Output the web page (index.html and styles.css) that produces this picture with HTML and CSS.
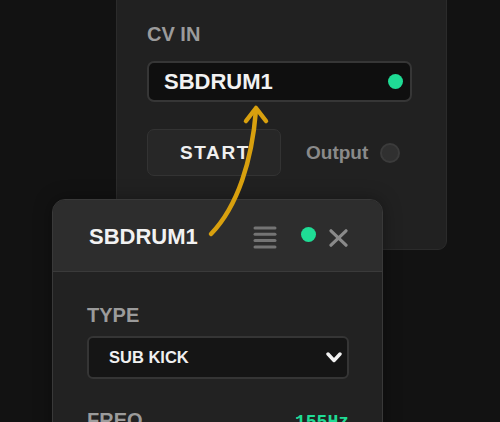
FILE: index.html
```html
<!DOCTYPE html>
<html>
<head>
<meta charset="utf-8">
<link rel="stylesheet" href="styles.css">
</head>
<body>
<div class="desk">
  <section class="panel back">
    <div class="label">CV IN</div>
    <div class="input">
      <span class="input-text">SBDRUM1</span>
      <span class="dot"></span>
    </div>
    <div class="controls">
      <button class="start">START</button>
      <span class="output">Output</span>
      <span class="led"></span>
    </div>
  </section>

  <section class="panel front">
    <header class="head">
      <span class="title">SBDRUM1</span>
      <svg class="menu" width="24" height="24" viewBox="0 0 24 24">
        <g stroke="#747474" stroke-width="3" stroke-linecap="round">
          <line x1="2" y1="3" x2="22" y2="3"/>
          <line x1="2" y1="9.3" x2="22" y2="9.3"/>
          <line x1="2" y1="15.6" x2="22" y2="15.6"/>
          <line x1="2" y1="22" x2="22" y2="22"/>
        </g>
      </svg>
      <span class="dot"></span>
      <svg class="close" width="19" height="18" viewBox="0 0 19 18">
        <g stroke="#8a8a8a" stroke-width="3.2" stroke-linecap="round">
          <line x1="2" y1="1.8" x2="17" y2="16.2"/>
          <line x1="17" y1="1.8" x2="2" y2="16.2"/>
        </g>
      </svg>
    </header>
    <div class="body">
      <div class="label">TYPE</div>
      <div class="select">
        <span class="select-text">SUB KICK</span>
        <svg class="chev" width="16" height="11" viewBox="0 0 16 11">
          <polyline points="2,2 8,8.5 14,2" fill="none" stroke="#f2f2f2" stroke-width="3.4" stroke-linecap="round" stroke-linejoin="round"/>
        </svg>
      </div>
      <div class="row">
        <span class="label">FREQ</span>
        <span class="value">155Hz</span>
      </div>
    </div>
  </section>

  <svg class="arrow" width="500" height="422" viewBox="0 0 500 422">
    <g fill="none" stroke="#d8a00e" stroke-width="4.5" stroke-linecap="round" stroke-linejoin="round">
      <path d="M211 234 C 238 206, 252 160, 256 110"/>
      <polyline points="246,121 256,108 266,121"/>
    </g>
  </svg>
</div>
</body>
</html>
```

FILE: styles.css
```css
* { box-sizing: border-box; }
html, body {
  margin: 0;
  padding: 0;
  background: #121212;
}
body {
  width: 500px;
  height: 422px;
  overflow: hidden;
  font-family: "Liberation Sans", Arial, sans-serif;
}
.desk {
  position: relative;
  width: 500px;
  height: 422px;
}
.panel {
  position: absolute;
}
.back {
  left: 116px;
  top: -30px;
  width: 331px;
  height: 280px;
  background: #212121;
  border: 1px solid #2b2b2b;
  border-radius: 9px;
  padding: 51px 34px 0 30px;
}
.label {
  font-size: 20px;
  line-height: 24px;
  font-weight: bold;
  color: #9b9b9b;
}
.input {
  margin-top: 15px;
  height: 41px;
  border: 2px solid #363636;
  border-radius: 7px;
  background: #0f0f0f;
  display: flex;
  align-items: center;
  justify-content: space-between;
  padding: 0 7px 0 15px;
}
.input-text, .title {
  font-size: 22px;
  font-weight: bold;
  color: #f2f2f2;
}
.dot {
  width: 15px;
  height: 15px;
  border-radius: 50%;
  background: #1fdc95;
  flex: none;
}
.controls {
  margin-top: 27px;
  display: flex;
  align-items: center;
}
.start {
  width: 134px;
  height: 47px;
  background: #272727;
  border: 1.5px solid #333333;
  border-radius: 7px;
  color: #f0f0f0;
  font-family: "Liberation Sans", Arial, sans-serif;
  font-size: 19px;
  font-weight: bold;
  letter-spacing: 1.6px;
  padding: 0 0 0 2px;
}
.output {
  margin-left: 25px;
  font-size: 19px;
  font-weight: bold;
  color: #8a8a8a;
}
.led {
  margin-left: 12px;
  width: 20px;
  height: 20px;
  border-radius: 50%;
  background: #303030;
  border: 2px solid #3b3b3b;
}
.front {
  left: 52px;
  top: 199px;
  width: 331px;
  height: 260px;
  border: 1.5px solid #393939;
  border-radius: 13px;
  background: #222222;
  overflow: hidden;
  box-shadow: 0 0 18px rgba(0,0,0,0.35);
}
.head {
  height: 72px;
  background: #2d2d2d;
  border-bottom: 1.5px solid #3a3a3a;
  display: flex;
  align-items: center;
  padding: 3px 34px 0 36px;
}
.title {
  flex: 1;
}
.menu {
  margin-top: -1px;
}
.head .dot {
  margin-left: 24px;
  margin-top: -6px;
}
.close {
  margin-left: 13px;
  margin-top: 2px;
}
.body {
  padding: 31px 33px 0 34px;
}
.select {
  margin-top: 9px;
  height: 43px;
  border: 2px solid #353535;
  border-radius: 6px;
  background: #151515;
  display: flex;
  align-items: center;
  justify-content: space-between;
  padding: 0 5px 0 20px;
}
.select-text {
  font-size: 16.5px;
  font-weight: bold;
  color: #f0f0f0;
}
.row {
  margin-top: 29px;
  display: flex;
  justify-content: space-between;
  align-items: baseline;
}
.value {
  font-family: "Liberation Mono", monospace;
  font-size: 18px;
  font-weight: bold;
  color: #1fdc95;
}
.arrow {
  position: absolute;
  left: 0;
  top: 0;
  pointer-events: none;
}
```
